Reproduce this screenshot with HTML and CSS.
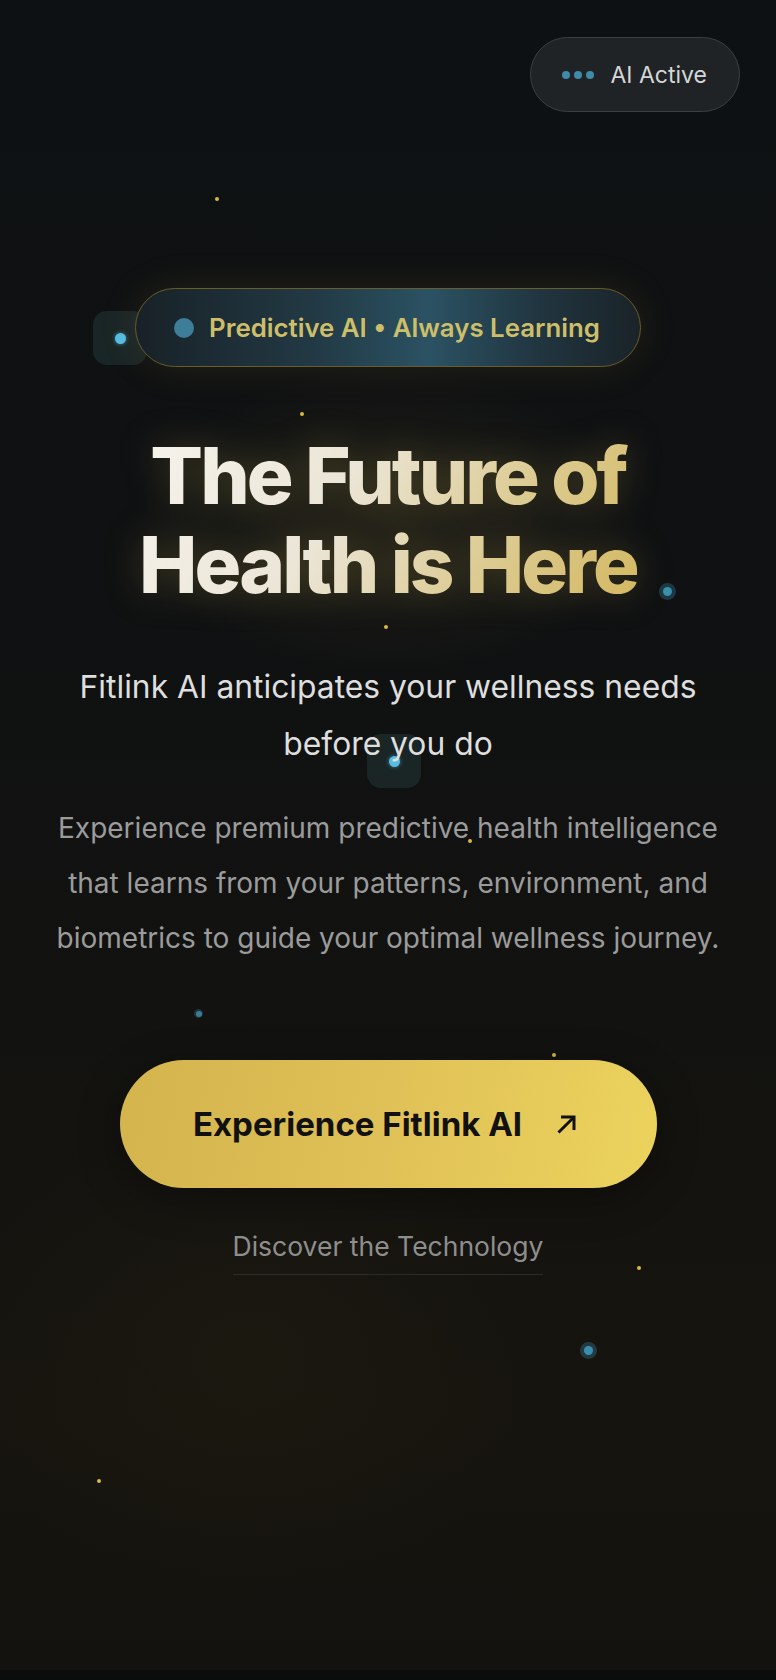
FILE: index.html
```html
<!DOCTYPE html>
<html lang="en">
<head>
<meta charset="utf-8">
<title>Fitlink AI</title>
<link rel="stylesheet" href="styles.css">
</head>
<body>
<section class="hero">
  <div class="glow"></div>
  <span class="spark" style="left:215px;top:197px"></span>
  <span class="spark" style="left:300px;top:412px"></span>
  <span class="spark" style="left:384px;top:625px"></span>
  <span class="spark" style="left:468px;top:839px"></span>
  <span class="spark" style="left:552px;top:1053px"></span>
  <span class="spark" style="left:637px;top:1266px"></span>
  <span class="spark" style="left:97px;top:1479px"></span>
  <span class="orb" style="left:659px;top:583px"></span>
  <span class="orb small" style="left:194px;top:1009px"></span>
  <span class="orb" style="left:580px;top:1342px"></span>
  <div class="float-box" style="left:93px;top:311px"><i></i></div>
  <div class="float-box" style="left:367px;top:734px"><i></i></div>

  <header class="topbar">
    <div class="status">
      <span class="dots"><i></i><i></i><i></i></span>
      <span>AI Active</span>
    </div>
  </header>

  <main class="content">
    <div class="badge">
      <span class="badge-dot"></span>
      <span class="badge-text">Predictive AI • Always Learning</span>
    </div>
    <h1 class="title">The Future of<br>Health is Here</h1>
    <p class="lead">Fitlink AI anticipates your wellness needs before you do</p>
    <p class="desc">Experience premium predictive health intelligence that learns from your patterns, environment, and biometrics to guide your optimal wellness journey.</p>
    <a class="cta" href="#">
      <span>Experience Fitlink AI</span>
      <svg width="24" height="24" viewBox="0 0 24 24" fill="none" stroke="#111" stroke-width="3" stroke-linecap="square"><path d="M4.5 19.5 L18 6"/><path d="M7.5 5 H19 V16.5"/></svg>
    </a>
    <a class="discover" href="#">Discover the Technology</a>
  </main>
</section>
</body>
</html>
```

FILE: styles.css
```css
* { box-sizing: border-box; }
html, body { margin: 0; padding: 0; }
body {
  background: #0b0c0c;
  font-family: Inter, "Noto Sans", sans-serif;
  color: #fff;
}
.hero {
  position: relative;
  min-height: 1670px;
  overflow: hidden;
  background:
    linear-gradient(180deg, #0e1113 0%, #0f1112 35%, #121210 60%, #16140e 85%, #13120e 100%);
}
.glow {
  position: absolute;
  left: 0; right: 0; top: 0; bottom: 0;
  background:
    radial-gradient(ellipse 360px 220px at 390px 520px, rgba(190,160,70,0.10), rgba(190,160,70,0) 70%),
    radial-gradient(ellipse 420px 360px at 250px 1350px, rgba(120,95,40,0.06), rgba(120,95,40,0) 70%);
  pointer-events: none;
}
.spark {
  position: absolute;
  width: 4px; height: 4px;
  border-radius: 50%;
  background: #d9b840;
}
.orb {
  position: absolute;
  width: 17px; height: 17px;
  border-radius: 50%;
  background: rgba(60,130,160,0.35);
}
.orb::after {
  content: "";
  position: absolute;
  left: 4px; top: 4px;
  width: 9px; height: 9px;
  border-radius: 50%;
  background: #3b8fae;
}
.orb.small { width: 9px; height: 9px; background: rgba(60,130,160,0.3); }
.orb.small::after { left: 1.5px; top: 1.5px; width: 6px; height: 6px; background: #3a7c98; }
.float-box {
  position: absolute;
  width: 54px; height: 54px;
  border-radius: 14px;
  background: rgba(40,62,64,0.45);
  display: flex;
  align-items: center;
  justify-content: center;
}
.float-box i {
  width: 11px; height: 11px;
  border-radius: 50%;
  background: #56bde2;
  box-shadow: 0 0 4px rgba(86,189,226,0.6);
}

.topbar {
  position: relative;
  display: flex;
  justify-content: flex-end;
  padding: 37px 36px 0 0;
}
.status {
  display: flex;
  align-items: center;
  gap: 16px;
  height: 75px;
  padding: 0 32px 0 31px;
  border-radius: 40px;
  background: #1f2326;
  border: 1.5px solid #3a3f42;
  color: #d6d6d6;
  font-size: 23px;
  font-weight: 400;
}
.dots { display: flex; gap: 4px; }
.dots i {
  width: 8px; height: 8px;
  border-radius: 50%;
  background: #3f8aa8;
}

.content {
  position: relative;
  display: flex;
  flex-direction: column;
  align-items: center;
  text-align: center;
  padding-top: 176px;
}
.badge {
  display: flex;
  align-items: center;
  gap: 15px;
  height: 79px;
  padding: 0 40px 0 38px;
  border-radius: 40px;
  border: 1.5px solid #6b5c2c;
  background: linear-gradient(90deg, #182127 0%, #223944 35%, #2b5263 58%, #213540 80%, #1a2328 100%);
  box-shadow: 0 0 40px rgba(200,165,60,0.12);
}
.badge-dot {
  width: 20px; height: 20px;
  border-radius: 50%;
  background: #3d7d98;
}
.badge-text {
  font-size: 25.8px;
  font-weight: 600;
  color: #cdbf6a;
}
.title {
  margin: 64px 0 0;
  font-size: 78px;
  line-height: 89px;
  font-weight: 800;
  letter-spacing: -0.037em;
  background: linear-gradient(120deg, #f6f3ec 0%, #ebe5d6 40%, #dccb92 70%, #d4b860 100%);
  -webkit-background-clip: text;
  background-clip: text;
  color: transparent;
  filter: drop-shadow(0 0 18px rgba(210,180,80,0.25));
}
.lead {
  margin: 49px 0 0;
  width: 680px;
  font-size: 31.8px;
  line-height: 57px;
  color: #dedede;
  font-weight: 400;
}
.desc {
  margin: 29px 0 0;
  width: 680px;
  font-size: 28px;
  line-height: 55px;
  color: #9b9b9b;
}
.cta {
  margin-top: 94px;
  display: flex;
  align-items: center;
  justify-content: center;
  gap: 33px;
  width: 537px;
  height: 128px;
  border-radius: 64px;
  background: linear-gradient(100deg, #d3b44d 0%, #e0c157 50%, #ecd35d 100%);
  color: #111;
  font-size: 33px;
  font-weight: 700;
  text-decoration: none;
  padding-right: 4px;
  box-shadow: 0 10px 40px rgba(0,0,0,0.35);
}
.discover {
  margin-top: 40px;
  padding-bottom: 10px;
  border-bottom: 1.5px solid #2c2c2c;
  font-size: 26.5px;
  line-height: 36px;
  color: #8e8e8e;
  text-decoration: none;
}
```
